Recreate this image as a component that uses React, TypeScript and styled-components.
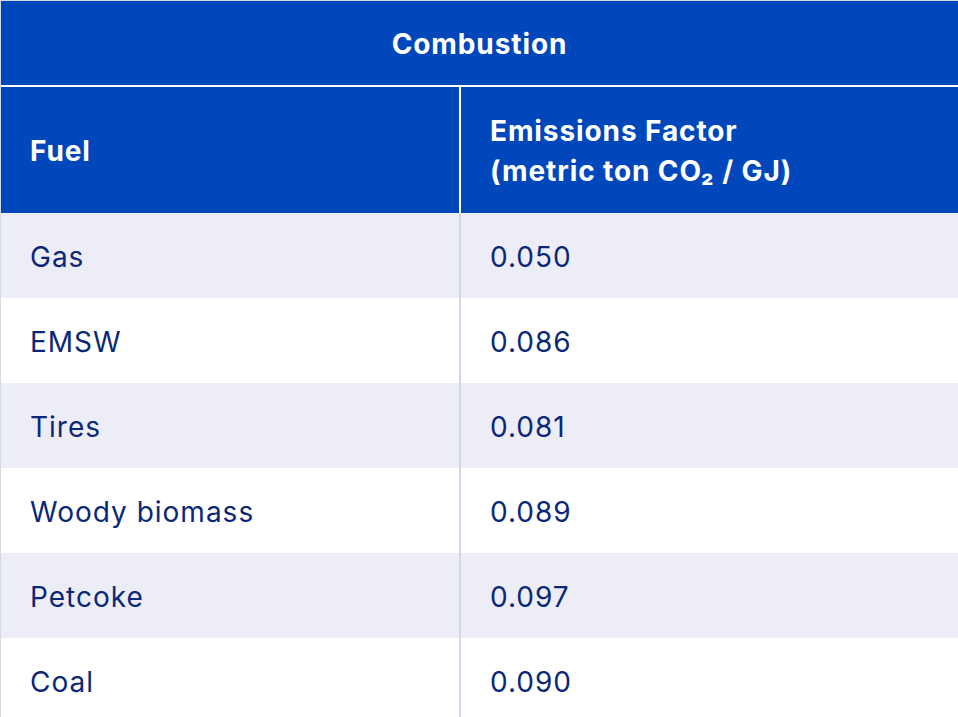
import styled, { createGlobalStyle } from 'styled-components'

interface IRow {
  fuel: string
  factor: string
}

const rows: IRow[] = [
  { fuel: 'Gas', factor: '0.050' },
  { fuel: 'EMSW', factor: '0.086' },
  { fuel: 'Tires', factor: '0.081' },
  { fuel: 'Woody biomass', factor: '0.089' },
  { fuel: 'Petcoke', factor: '0.097' },
  { fuel: 'Coal', factor: '0.090' },
]

const GlobalStyle = createGlobalStyle`
  body {
    margin: 0;
    background: #ffffff;
    font-family: Inter, 'Noto Sans', sans-serif;
  }
`

export default function App() {
  return (
    <>
      <GlobalStyle />
      <Table>
        <Title>Combustion</Title>
        <HeaderRow>
          <HeaderCell>Fuel</HeaderCell>
          <HeaderCell $divided>
            Emissions Factor
            <br />
            (metric ton CO₂ / GJ)
          </HeaderCell>
        </HeaderRow>
        {rows.map((row, index) => (
          <Row key={row.fuel} $shaded={index % 2 === 0}>
            <Cell>{row.fuel}</Cell>
            <Cell $divided>{row.factor}</Cell>
          </Row>
        ))}
      </Table>
    </>
  )
}

const Table = styled.div`
  border-left: 1px solid #d6d8e4;
  border-top: 1px solid #d6d8e4;
  box-sizing: border-box;
  display: flex;
  flex-direction: column;
  width: 958px;
`

const Title = styled.div`
  align-items: center;
  background: #0047bb;
  border-bottom: 2px solid #ffffff;
  box-sizing: border-box;
  color: #ffffff;
  display: flex;
  font-size: 28px;
  font-weight: 700;
  height: 86px;
  justify-content: center;
  letter-spacing: 0.9px;
  padding-top: 1px;
`

const HeaderRow = styled.div`
  background: #0047bb;
  display: grid;
  grid-template-columns: 458px 1fr;
  height: 126px;
`

const HeaderCell = styled.div<{ $divided?: boolean }>`
  align-items: center;
  border-left: ${({ $divided }) => ($divided ? '2px solid #ffffff' : 'none')};
  color: #ffffff;
  display: flex;
  font-size: 28px;
  font-weight: 700;
  letter-spacing: 0.9px;
  line-height: 40px;
  padding: 2px 29px 0;
`

const Row = styled.div<{ $shaded: boolean }>`
  background: ${({ $shaded }) => ($shaded ? '#ededf7' : '#ffffff')};
  display: grid;
  grid-template-columns: 458px 1fr;
  height: 85px;
`

const Cell = styled.div<{ $divided?: boolean }>`
  align-items: center;
  border-left: ${({ $divided }) => ($divided ? '2px solid #d4d5e6' : 'none')};
  color: #0b2878;
  display: flex;
  font-size: 28px;
  letter-spacing: 1px;
  padding: 3px 29px 0;
`
